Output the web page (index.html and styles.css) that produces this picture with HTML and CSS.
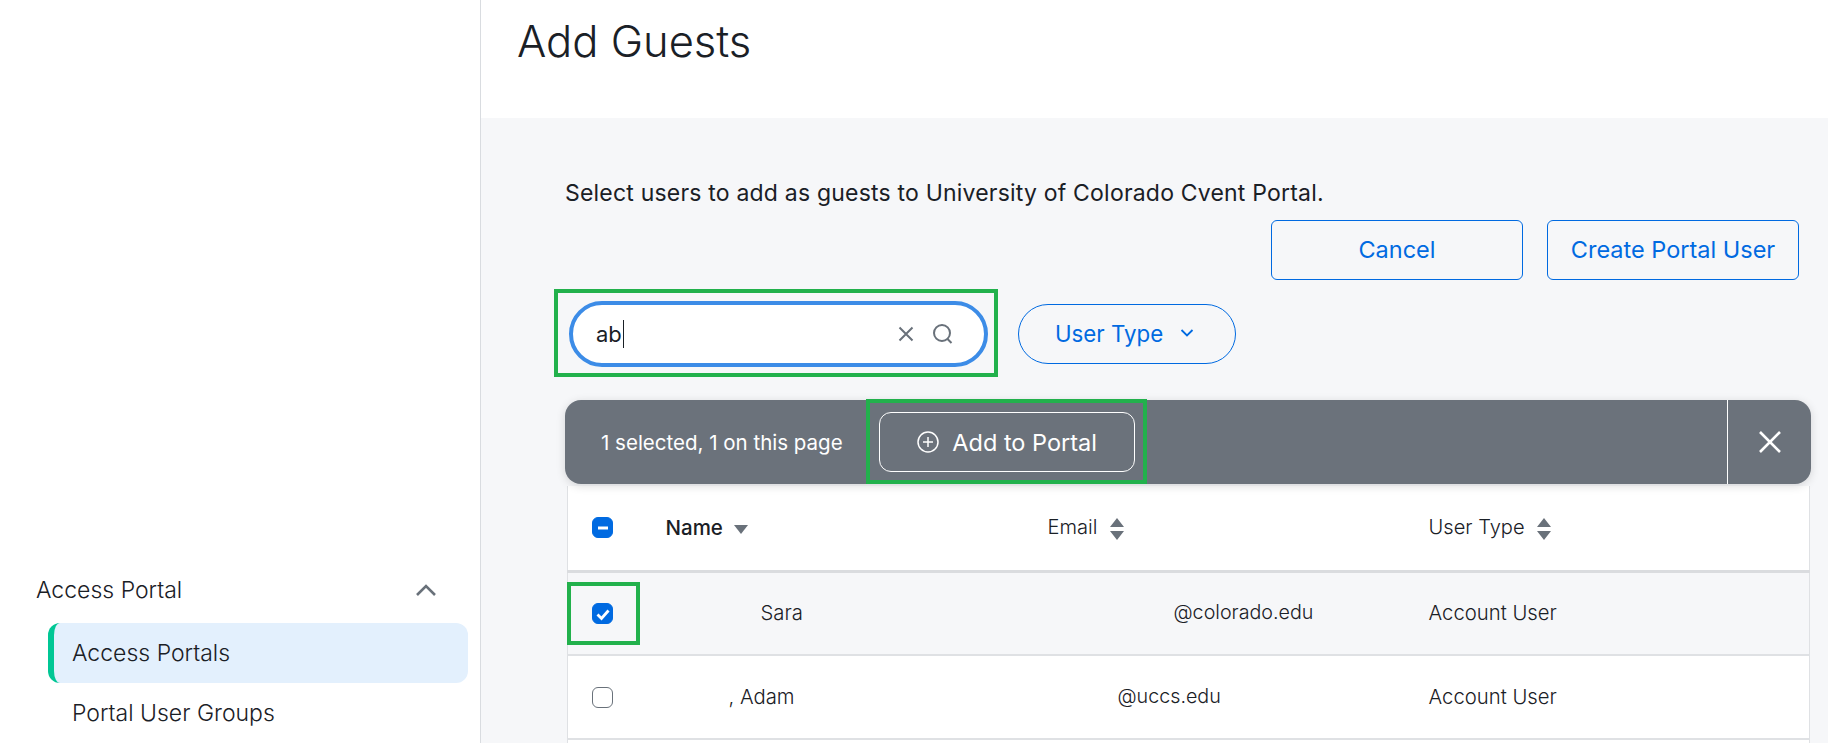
FILE: index.html
```html
<!DOCTYPE html>
<html lang="en">
<head>
<meta charset="utf-8">
<title>Add Guests</title>
<link rel="stylesheet" href="styles.css">
</head>
<body>
<div class="page">
  <aside class="sidebar">
    <div class="nav-head">
      <span>Access Portal</span>
      <svg class="nav-chevron" viewBox="0 0 24 14" width="24" height="14"><path d="M3 12 12 3l9 9" fill="none" stroke="#69717a" stroke-width="2.6"/></svg>
    </div>
    <a class="nav-item active">Access Portals</a>
    <a class="nav-item">Portal User Groups</a>
  </aside>
  <main class="main">
    <header class="title-bar"><h1>Add Guests</h1></header>
    <section class="content">
      <p class="intro">Select users to add as guests to University of Colorado Cvent Portal.</p>
      <div class="actions">
        <button class="btn">Cancel</button>
        <button class="btn">Create Portal User</button>
      </div>
      <div class="filters">
        <div class="search annotated">
          <span class="search-text">ab</span><span class="caret"></span>
          <svg class="search-clear" viewBox="0 0 16 16" width="16" height="16"><path d="M1.500 1.500l13 13M14.500 1.500l-13 13" stroke="#69717a" stroke-width="2" fill="none"/></svg>
          <svg class="search-icon" viewBox="0 0 22 22" width="22" height="22"><circle cx="10" cy="10" r="8" fill="none" stroke="#69717a" stroke-width="2"/><path d="M15.500 16l4 4" stroke="#69717a" stroke-width="2" fill="none"/></svg>
        </div>
        <button class="pill">User Type
          <svg viewBox="0 0 14 10" width="14" height="10"><path d="M1.500 2 7 7.500 12.500 2" fill="none" stroke="#006ae1" stroke-width="1.8"/></svg>
        </button>
      </div>
      <div class="bulk-bar">
        <span class="bulk-count">1 selected, 1 on this page</span>
        <button class="bulk-add annotated">
          <svg viewBox="0 0 24 24" width="24" height="24"><circle cx="12" cy="12" r="10" fill="none" stroke="#fff" stroke-width="1.5"/><path d="M12 7v10M7 12h10" stroke="#fff" stroke-width="1.5"/></svg>
          Add to Portal
        </button>
        <button class="bulk-close">
          <svg viewBox="0 0 22 22" width="22" height="22"><path d="M1 1l20 20M21 1 1 21" stroke="#fff" stroke-width="2.600" fill="none"/></svg>
        </button>
      </div>
      <table class="grid">
        <colgroup><col class="col-check"><col class="col-name"><col class="col-email"><col></colgroup>
        <thead>
          <tr>
            <th><span class="check checked"><svg viewBox="0 0 22 22" width="22" height="22"><path d="M6 11h10" stroke="#fff" stroke-width="3"/></svg></span></th>
            <th class="sorted">Name <svg class="sort-down" viewBox="0 0 14 9" width="14" height="9"><path d="M0 0h14L7 9z" fill="#69717a"/></svg></th>
            <th>Email <svg class="sort-both" viewBox="0 0 14 24" width="14" height="24"><path d="M7 1l7 9H0zM0 14h14l-7 9z" fill="#69717a"/></svg></th>
            <th>User Type <svg class="sort-both" viewBox="0 0 14 24" width="14" height="24"><path d="M7 1l7 9H0zM0 14h14l-7 9z" fill="#69717a"/></svg></th>
          </tr>
        </thead>
        <tbody>
          <tr class="selected">
            <td><span class="check checked annotated-check"><svg viewBox="0 0 22 22" width="22" height="22"><path d="M5.500 11.500l4 4 7-8" stroke="#fff" stroke-width="2.800" fill="none"/></svg></span></td>
            <td class="name-first">Sara</td>
            <td class="email-long">@colorado.edu</td>
            <td>Account User</td>
          </tr>
          <tr>
            <td><span class="check"></span></td>
            <td class="name-second">, Adam</td>
            <td class="email-short">@uccs.edu</td>
            <td>Account User</td>
          </tr>
          <tr><td></td><td></td><td></td><td></td></tr>
        </tbody>
      </table>
    </section>
  </main>
</div>
</body>
</html>
```

FILE: styles.css
```css
* { box-sizing: border-box; }
html, body { margin: 0; height: 100%; overflow: hidden; }
body { font-family: Inter, "Noto Sans", sans-serif; font-weight: 300; color: #1a2026; background: #fff; }
button { font: inherit; background: none; cursor: pointer; }

.page { display: flex; height: 743px; overflow: hidden; }

.sidebar { width: 481px; flex: none; border-right: 1px solid #d9dce0; display: flex; flex-direction: column; justify-content: flex-end; font-size: 23px; }
.nav-head { height: 60px; margin-bottom: 3px; padding: 0 42px 1px 36px; display: flex; align-items: center; justify-content: space-between; }
.nav-item { height: 60px; margin: 0 12px 0 48px; padding: 0 0 1px 24px; display: flex; align-items: center; border-radius: 12px; }
.nav-item.active { background: #e3f0fd; border-left: 6px solid #00c795; padding-left: 18px; }

.main { flex: 1; min-width: 0; height: 743px; overflow: hidden; display: flex; flex-direction: column; }
.title-bar { height: 118px; flex: none; padding-left: 36px; }
.title-bar h1 { margin: 0; font-size: 43.5px; font-weight: 300; line-height: 82px; }

.content { flex: 1; min-height: 0; overflow: hidden; background: #f6f7f9; padding: 63px 17px 0 84px; }
.intro { margin: 0; font-size: 23px; letter-spacing: .2px; font-weight: 400; line-height: 24px; }

.actions { display: flex; justify-content: flex-end; gap: 24px; margin-top: 15px; padding-right: 12px; }
.btn { width: 252px; height: 60px; padding: 0 0 2px; border: 1px solid #006ae1; border-radius: 6px; color: #006ae1; font-size: 23.5px; font-weight: 400; }

.filters { display: flex; align-items: center; gap: 30px; margin-top: 21px; padding-left: 4px; }
.search { position: relative; width: 419px; height: 66px; border: 4px solid #3c8ce7; border-radius: 33px; background: #fff; display: flex; align-items: center; padding: 0 30px 0 23px; font-size: 22px; font-weight: 400; }
.caret { width: 1px; height: 28px; background: #1a2026; margin-left: 1px; }
.search-clear { margin-left: auto; }
.search-icon { margin-left: 18px; }
.pill { width: 218px; height: 60px; border: 1px solid #006ae1; border-radius: 30px; color: #006ae1; font-size: 22.3px; font-weight: 400; display: flex; align-items: center; padding: 0 0 2px 36px; gap: 17px; }

.annotated::after, .annotated-check::after { content: ""; position: absolute; border: 4px solid #22b14c; pointer-events: none; }
.search.annotated::after { inset: -16px -14px -14px -19px; }

.bulk-bar { display: flex; align-items: center; height: 84px; margin-top: 33px; padding-left: 36px; background: #6b727b; border-radius: 16px; color: #fff; box-shadow: 0 2px 10px rgba(0, 0, 0, .14); position: relative; }
.bulk-count { font-size: 20.5px; font-weight: 400; }
.bulk-add { position: relative; margin-left: 36px; width: 256px; height: 60px; border: 1px solid #fff; border-radius: 12px; color: #fff; font-size: 23.5px; font-weight: 400; display: flex; align-items: center; justify-content: center; gap: 12px; }
.bulk-add.annotated::after { inset: -14px -13px -13px -14px; }
.bulk-close { margin-left: auto; width: 84px; height: 84px; border: 0; border-left: 1px solid #fff; display: flex; align-items: center; justify-content: center; }

.grid { width: 1243px; margin: 2px 0 0 2px; border-collapse: collapse; table-layout: fixed; background: #fff; border-left: 1px solid #dfe1e4; border-right: 1px solid #dfe1e4; font-size: 20.3px; }
.col-check { width: 98px; }
.col-name { width: 382px; }
.col-email { width: 381px; }
.grid th { height: 85px; padding: 0; text-align: left; font-size: 20.1px; font-weight: 300; border-bottom: 3px solid #dadcdf; }
.grid th.sorted { font-size: 20.500px; font-weight: 500; }
.grid th svg { vertical-align: middle; margin-left: 7px; }
.grid th .sort-down { margin-left: 6px; }
.grid th .check svg { display: block; margin: -1px 0 0 -1px; }
.grid td { height: 84px; padding: 0; border-bottom: 2px solid #dfe1e4; }
.grid td + td { padding-bottom: 2px; }
.grid tr.selected td { background: #f6f7f9; }
.grid th:first-child, .grid td:first-child { padding-left: 24px; }

.check { position: relative; display: block; width: 21px; height: 21px; border: 1px solid #69717a; border-radius: 6px; background: #fff; }
.check.checked { background: #006ae1; border-color: #006ae1; }
.check svg { display: block; margin: -1px 0 0 -1px; }
.annotated-check::after { inset: -22px -28px -22px -26px; }

.grid td.name-first { padding-left: 95px; }
.grid td.name-second { padding-left: 63px; }
.grid td.email-long { padding-left: 126px; font-size: 19.7px; }
.grid td.email-short { padding-left: 70px; font-size: 19.7px; }
```
